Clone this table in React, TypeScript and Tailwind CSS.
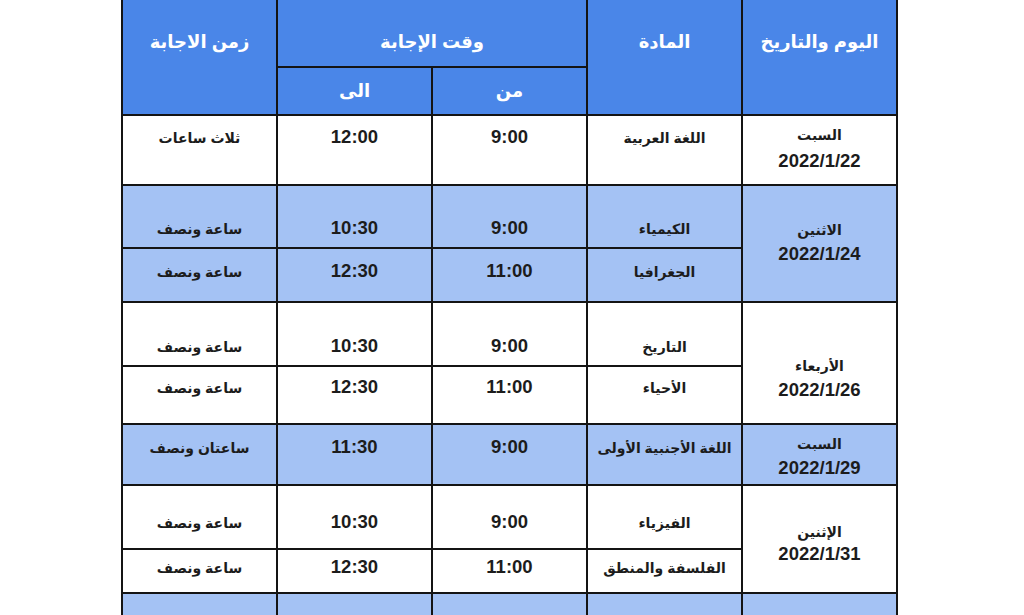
import React from "react";

const FONT = { fontFamily: '"Liberation Sans", "DejaVu Sans", Arial, sans-serif' };

type CellProps = {
  className: string;
  children?: React.ReactNode;
};

function Cell({ className, children }: CellProps) {
  return <div className={"text-center " + className}>{children}</div>;
}

function Ar({ children }: { children: React.ReactNode }) {
  return (
    <span dir="rtl" className="text-[14px] font-bold text-[#1c1c1c] leading-[22px]">
      {children}
    </span>
  );
}

function Num({ children }: { children: React.ReactNode }) {
  return <span className="text-[18.5px] font-bold text-[#1c1c1c] leading-[22px]">{children}</span>;
}

function DateCell({
  className,
  day,
  date,
}: {
  className: string;
  day: string;
  date: string;
}) {
  return (
    <Cell className={"flex flex-col items-center " + className}>
      <span dir="rtl" className="text-[14px] font-bold text-[#1c1c1c]">
        {day}
      </span>
      <span className="text-[18.5px] font-bold text-[#1c1c1c]">{date}</span>
    </Cell>
  );
}

export default function App() {
  const hd = "bg-[#4a86e8] text-white font-bold text-[18px]";
  const lb = "bg-[#a4c2f4]";
  const wh = "bg-white";
  return (
    <div className="h-[615px] w-[1024px] overflow-hidden bg-white" style={FONT}>
      <div className="ml-[121px] grid w-fit grid-cols-[repeat(5,153px)] grid-rows-[66px_46px_68px_61px_52px_62px_56px_59px_62px_42px_60px] gap-[2px] bg-[#141414] px-[2px]">
        {/* header */}
        <Cell className={`${hd} col-start-1 row-start-1 row-span-2 pt-[30px] leading-[24px]`}>
          <span dir="rtl">زمن الاجابة</span>
        </Cell>
        <Cell className={`${hd} col-start-2 col-span-2 row-start-1 pt-[30px] leading-[24px]`}>
          <span dir="rtl">وقت الإجابة</span>
        </Cell>
        <Cell className={`${hd} col-start-2 row-start-2 flex items-center justify-center leading-[24px]`}>
          <span dir="rtl">الى</span>
        </Cell>
        <Cell className={`${hd} col-start-3 row-start-2 flex items-center justify-center leading-[24px]`}>
          <span dir="rtl">من</span>
        </Cell>
        <Cell className={`${hd} col-start-4 row-start-1 row-span-2 pt-[30px] leading-[24px]`}>
          <span dir="rtl">المادة</span>
        </Cell>
        <Cell className={`${hd} col-start-5 row-start-1 row-span-2 pt-[30px] leading-[24px]`}>
          <span dir="rtl">اليوم والتاريخ</span>
        </Cell>

        {/* Row A */}
        <Cell className={`${wh} col-start-1 row-start-3 pt-[10px]`}><Ar>ثلاث ساعات</Ar></Cell>
        <Cell className={`${wh} col-start-2 row-start-3 pt-[10px]`}><Num>12:00</Num></Cell>
        <Cell className={`${wh} col-start-3 row-start-3 pt-[10px]`}><Num>9:00</Num></Cell>
        <Cell className={`${wh} col-start-4 row-start-3 pt-[10px]`}><Ar>اللغة العربية</Ar></Cell>
        <DateCell className={`${wh} col-start-5 row-start-3 pt-[7px] leading-[25px]`} day="السبت" date="2022/1/22" />

        {/* Row B1 */}
        <Cell className={`${lb} col-start-1 row-start-4 pt-[31px]`}><Ar>ساعة ونصف</Ar></Cell>
        <Cell className={`${lb} col-start-2 row-start-4 pt-[31px]`}><Num>10:30</Num></Cell>
        <Cell className={`${lb} col-start-3 row-start-4 pt-[31px]`}><Num>9:00</Num></Cell>
        <Cell className={`${lb} col-start-4 row-start-4 pt-[31px]`}><Ar>الكيمياء</Ar></Cell>
        <DateCell className={`${lb} col-start-5 row-start-4 row-span-2 pt-[32px] leading-[24px]`} day="الاثنين" date="2022/1/24" />

        {/* Row B2 */}
        <Cell className={`${lb} col-start-1 row-start-5 pt-[11px]`}><Ar>ساعة ونصف</Ar></Cell>
        <Cell className={`${lb} col-start-2 row-start-5 pt-[11px]`}><Num>12:30</Num></Cell>
        <Cell className={`${lb} col-start-3 row-start-5 pt-[11px]`}><Num>11:00</Num></Cell>
        <Cell className={`${lb} col-start-4 row-start-5 pt-[11px]`}><Ar>الجغرافيا</Ar></Cell>

        {/* Row C1 */}
        <Cell className={`${wh} col-start-1 row-start-6 pt-[32px]`}><Ar>ساعة ونصف</Ar></Cell>
        <Cell className={`${wh} col-start-2 row-start-6 pt-[32px]`}><Num>10:30</Num></Cell>
        <Cell className={`${wh} col-start-3 row-start-6 pt-[32px]`}><Num>9:00</Num></Cell>
        <Cell className={`${wh} col-start-4 row-start-6 pt-[32px]`}><Ar>التاريخ</Ar></Cell>
        <DateCell className={`${wh} col-start-5 row-start-6 row-span-2 pt-[52px] leading-[23px]`} day="الأربعاء" date="2022/1/26" />

        {/* Row C2 */}
        <Cell className={`${wh} col-start-1 row-start-7 pt-[9px]`}><Ar>ساعة ونصف</Ar></Cell>
        <Cell className={`${wh} col-start-2 row-start-7 pt-[9px]`}><Num>12:30</Num></Cell>
        <Cell className={`${wh} col-start-3 row-start-7 pt-[9px]`}><Num>11:00</Num></Cell>
        <Cell className={`${wh} col-start-4 row-start-7 pt-[9px]`}><Ar>الأحياء</Ar></Cell>

        {/* Row D */}
        <Cell className={`${lb} col-start-1 row-start-8 pt-[11px]`}><Ar>ساعتان ونصف</Ar></Cell>
        <Cell className={`${lb} col-start-2 row-start-8 pt-[11px]`}><Num>11:30</Num></Cell>
        <Cell className={`${lb} col-start-3 row-start-8 pt-[11px]`}><Num>9:00</Num></Cell>
        <Cell className={`${lb} col-start-4 row-start-8 pt-[11px]`}><Ar>اللغة الأجنبية الأولى</Ar></Cell>
        <DateCell className={`${lb} col-start-5 row-start-8 pt-[7px] leading-[24px]`} day="السبت" date="2022/1/29" />

        {/* Row E1 */}
        <Cell className={`${wh} col-start-1 row-start-9 pt-[25px]`}><Ar>ساعة ونصف</Ar></Cell>
        <Cell className={`${wh} col-start-2 row-start-9 pt-[25px]`}><Num>10:30</Num></Cell>
        <Cell className={`${wh} col-start-3 row-start-9 pt-[25px]`}><Num>9:00</Num></Cell>
        <Cell className={`${wh} col-start-4 row-start-9 pt-[25px]`}><Ar>الفيزياء</Ar></Cell>
        <DateCell className={`${wh} col-start-5 row-start-9 row-span-2 pt-[35px] leading-[22px]`} day="الإثنين" date="2022/1/31" />

        {/* Row E2 */}
        <Cell className={`${wh} col-start-1 row-start-10 pt-[6px]`}><Ar>ساعة ونصف</Ar></Cell>
        <Cell className={`${wh} col-start-2 row-start-10 pt-[6px]`}><Num>12:30</Num></Cell>
        <Cell className={`${wh} col-start-3 row-start-10 pt-[6px]`}><Num>11:00</Num></Cell>
        <Cell className={`${wh} col-start-4 row-start-10 pt-[6px]`}><Ar>الفلسفة والمنطق</Ar></Cell>

        {/* Row F (partially visible) */}
        <Cell className={`${lb} col-start-1 row-start-11`} />
        <Cell className={`${lb} col-start-2 row-start-11`} />
        <Cell className={`${lb} col-start-3 row-start-11`} />
        <Cell className={`${lb} col-start-4 row-start-11`} />
        <Cell className={`${lb} col-start-5 row-start-11`} />
      </div>
    </div>
  );
}
